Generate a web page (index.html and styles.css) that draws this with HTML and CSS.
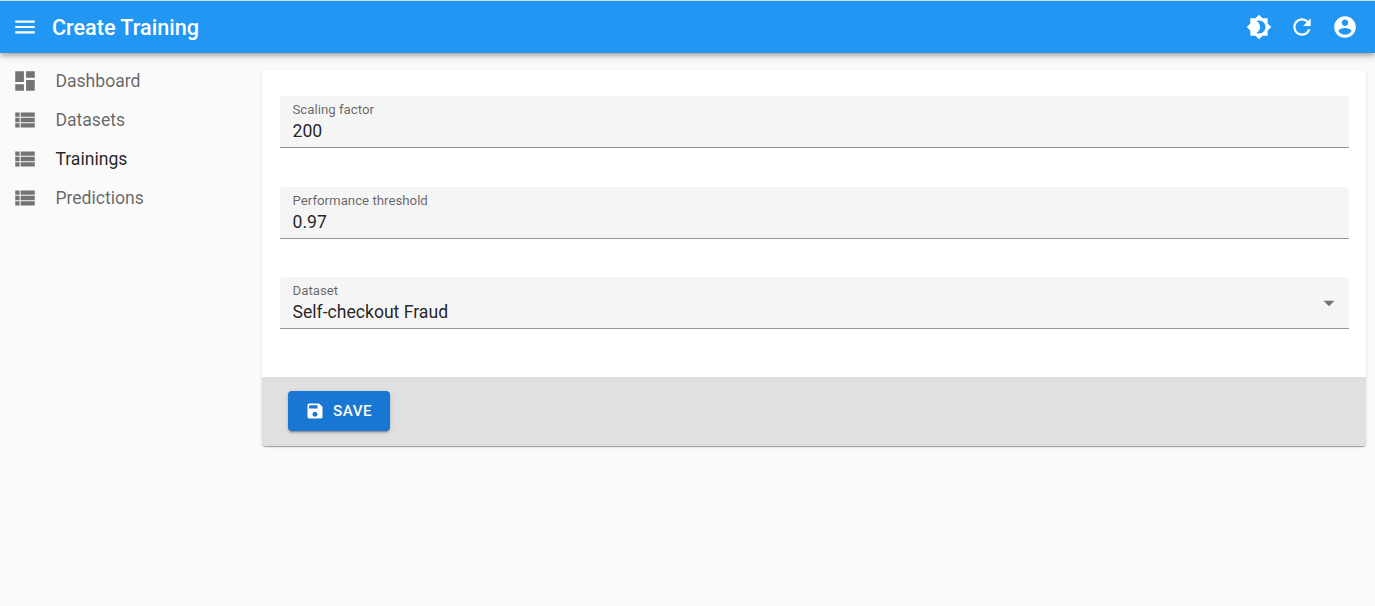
FILE: index.html
```
<!DOCTYPE html>
<html lang="en">
<head>
    <meta charset="UTF-8">
    <meta name="viewport" content="width=device-width, initial-scale=1.0">
    <title>Create Training</title>
    <link rel="stylesheet" href="styles.css">
</head>
<body>
    <header class="appbar">
        <button class="icon_btn menu_btn" aria-label="Menu">
            <svg class="icon" viewBox="0 0 24 24"><path d="M3 18h18v-2H3v2zm0-5h18v-2H3v2zm0-7v2h18V6H3z"/></svg>
        </button>
        <h1 class="title">Create Training</h1>
        <div class="actions">
            <button class="icon_btn" aria-label="Toggle theme">
                <svg class="icon" viewBox="0 0 24 24"><path d="M20 8.69V4h-4.69L12 .69 8.69 4H4v4.69L.69 12 4 15.31V20h4.69L12 23.31 15.31 20H20v-4.69L23.31 12 20 8.69zM12 18c-.89 0-1.74-.2-2.5-.55C11.56 16.5 13 14.42 13 12s-1.44-4.5-3.5-5.45C10.26 6.2 11.11 6 12 6c3.31 0 6 2.69 6 6s-2.69 6-6 6z"/></svg>
            </button>
            <button class="icon_btn" aria-label="Refresh">
                <svg class="icon" viewBox="0 0 24 24"><path d="M17.65 6.35C16.2 4.9 14.21 4 12 4c-4.42 0-7.99 3.58-7.99 8s3.57 8 7.99 8c3.73 0 6.84-2.55 7.73-6h-2.08c-.82 2.33-3.04 4-5.65 4-3.31 0-6-2.69-6-6s2.69-6 6-6c1.66 0 3.14.69 4.22 1.78L13 11h7V4l-2.35 2.35z"/></svg>
            </button>
            <button class="icon_btn" aria-label="Profile">
                <svg class="icon" viewBox="0 0 24 24"><path d="M12 2C6.48 2 2 6.48 2 12s4.480 10 10 10 10-4.480 10-10S17.520 2 12 2zm0 3c1.660 0 3 1.340 3 3s-1.340 3-3 3-3-1.340-3-3 1.340-3 3-3zm0 14.200c-2.500 0-4.710-1.280-6-3.220.03-1.990 4-3.080 6-3.080 1.990 0 5.970 1.090 6 3.080-1.290 1.940-3.500 3.220-6 3.220z"/></svg>
            </button>
        </div>
    </header>

    <div class="layout">
        <nav class="sidebar">
            <a class="menu_item">
                <svg class="icon" viewBox="0 0 24 24"><path d="M3 13h8V3H3v10zm0 8h8v-6H3v6zm10 0h8V11h-8v10zm0-18v6h8V3h-8z"/></svg>
                <span>Dashboard</span>
            </a>
            <a class="menu_item">
                <svg class="icon" viewBox="0 0 24 24"><path d="M3 14h4v-4H3v4zm0 5h4v-4H3v4zM3 9h4V5H3v4zm5 5h13v-4H8v4zm0 5h13v-4H8v4zM8 5v4h13V5H8z"/></svg>
                <span>Datasets</span>
            </a>
            <a class="menu_item active">
                <svg class="icon" viewBox="0 0 24 24"><path d="M3 14h4v-4H3v4zm0 5h4v-4H3v4zM3 9h4V5H3v4zm5 5h13v-4H8v4zm0 5h13v-4H8v4zM8 5v4h13V5H8z"/></svg>
                <span>Trainings</span>
            </a>
            <a class="menu_item">
                <svg class="icon" viewBox="0 0 24 24"><path d="M3 14h4v-4H3v4zm0 5h4v-4H3v4zM3 9h4V5H3v4zm5 5h13v-4H8v4zm0 5h13v-4H8v4zM8 5v4h13V5H8z"/></svg>
                <span>Predictions</span>
            </a>
        </nav>

        <main class="card">
            <div class="fields">
                <div class="field">
                    <span class="label">Scaling factor</span>
                    <span class="value">200</span>
                </div>
                <div class="field">
                    <span class="label">Performance threshold</span>
                    <span class="value">0.97</span>
                </div>
                <div class="field select">
                    <div class="text">
                        <span class="label">Dataset</span>
                        <span class="value">Self-checkout Fraud</span>
                    </div>
                    <svg class="icon" viewBox="0 0 24 24"><path d="M7 10l5 5 5-5z"/></svg>
                </div>
            </div>
            <div class="toolbar">
                <button class="save">
                    <svg class="icon" viewBox="0 0 24 24"><path d="M17 3H5c-1.110 0-2 .9-2 2v14c0 1.100.89 2 2 2h14c1.100 0 2-.9 2-2V7l-4-4zm-5 16c-1.660 0-3-1.340-3-3s1.340-3 3-3 3 1.340 3 3-1.340 3-3 3zm3-10H5V5h10v4z"/></svg>
                    <span>Save</span>
                </button>
            </div>
        </main>
    </div>
</body>
</html>
```
FILE: styles.css
```
* {
  margin: 0;
  padding: 0;
  box-sizing: border-box;
}
body {
  min-height: 100vh;
  background-color: #fafafa;
  font-family: Roboto, "Liberation Sans", sans-serif;
  font-size: 17.6px;
  color: rgba(0, 0, 0, 0.87);
}
button {
  border: none;
  background: none;
  font-family: inherit;
  color: inherit;
  cursor: pointer;
}
.icon {
  display: block;
  flex-shrink: 0;
  width: 26px;
  height: 26px;
  fill: currentColor;
}

/* top bar */
.appbar {
  display: flex;
  align-items: center;
  height: 53px;
  padding: 0 8.3px 0 3px;
  border-top: 1px solid #c5dff5;
  background-color: #2196f3;
  box-shadow: 0 2px 4px -1px rgba(0, 0, 0, 0.2), 0 4px 5px rgba(0, 0, 0, 0.14), 0 1px 10px rgba(0, 0, 0, 0.12);
  color: #fff;
}
.icon_btn {
  padding: 9px 8.6px;
}
.menu_btn {
  padding: 9px;
}
.title {
  flex: 1;
  margin-left: 5px;
  padding-top: 1px;
  font-size: 21.6px;
  font-weight: 500;
  line-height: 34px;
}
.actions {
  display: flex;
}

.layout {
  display: flex;
  align-items: flex-start;
}

/* sidebar */
.sidebar {
  width: 262px;
  padding-top: 9px;
}
.menu_item {
  display: flex;
  align-items: center;
  height: 39px;
  padding-left: 12px;
  color: rgba(0, 0, 0, 0.6);
}
.menu_item span {
  padding-bottom: 1px;
}
.menu_item .icon {
  margin: 0 17.4px 1px 0;
  color: rgba(0, 0, 0, 0.54);
}
.menu_item.active {
  color: rgba(0, 0, 0, 0.87);
}

/* form */
.card {
  flex: 1;
  margin: 17px 9px 0 0;
  border-radius: 4px;
  background-color: #fff;
  box-shadow: 0 2px 1px -1px rgba(0, 0, 0, 0.2), 0 1px 1px rgba(0, 0, 0, 0.14), 0 1px 3px rgba(0, 0, 0, 0.12);
}
.fields {
  display: flex;
  flex-direction: column;
  gap: 38.6px;
  height: 307px;
  padding: 26px 17px 0 18px;
}
.field {
  height: 52px;
  padding: 4px 12.5px 0;
  border-bottom: 1px solid #949494;
  border-radius: 4px 4px 0 0;
  background-color: #f5f5f5;
}
.label {
  display: block;
  font-size: 13.25px;
  line-height: 19px;
  color: rgba(0, 0, 0, 0.6);
}
.value {
  display: block;
  line-height: 25px;
}
.select {
  display: flex;
  justify-content: space-between;
  padding-right: 7px;
}
.select .icon {
  margin-top: 9px;
  color: rgba(0, 0, 0, 0.54);
}
.toolbar {
  height: 68.5px;
  padding: 14px 26px;
  border-radius: 0 0 4px 4px;
  background-color: #e0e0e0;
}
.save {
  display: flex;
  align-items: center;
  width: 102px;
  height: 39.5px;
  padding-left: 17px;
  border-radius: 4px;
  background-color: #1976d2;
  box-shadow: 0 3px 1px -2px rgba(0, 0, 0, 0.2), 0 2px 2px rgba(0, 0, 0, 0.14), 0 1px 5px rgba(0, 0, 0, 0.12);
  font-size: 15.2px;
  font-weight: 500;
  letter-spacing: 0.5px;
  text-transform: uppercase;
  color: #fff;
}
.save .icon {
  width: 20px;
  height: 20px;
  margin-right: 8px;
}
```
